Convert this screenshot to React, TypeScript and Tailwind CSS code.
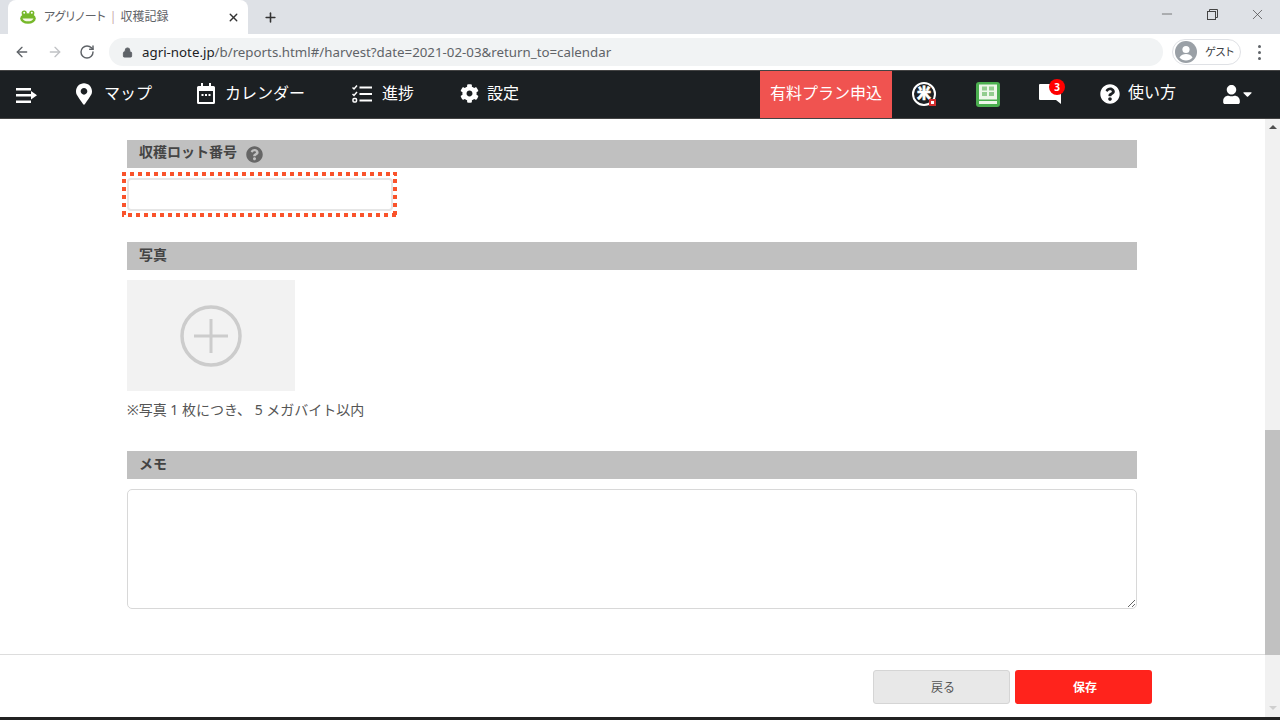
import { ArrowLeft, ArrowRight, Lock, Minus, Plus, RotateCw, X } from "lucide-react";
import { FaCaretDown, FaCog, FaMapMarkerAlt, FaQuestionCircle, FaUser } from "react-icons/fa";

const FONT = "font-['Noto_Sans','Noto_Sans_CJK_JP',sans-serif]";

function FrogIcon() {
  return (
    <svg width="16" height="14" viewBox="0 0 16 14">
      <circle cx="4.2" cy="3" r="2.6" fill="#76b82a" />
      <circle cx="11.8" cy="3" r="2.6" fill="#76b82a" />
      <ellipse cx="8" cy="8.5" rx="7.8" ry="5.2" fill="#76b82a" />
      <circle cx="4.2" cy="2.8" r="1" fill="#fff" />
      <circle cx="11.8" cy="2.8" r="1" fill="#fff" />
      <path d="M2.5 8.5h11c-.8 2-3 2.8-5.500 2.800s-4.700-.8-5.500-2.800z" fill="#f6f7e8" />
    </svg>
  );
}

function CalendarIcon() {
  return (
    <svg width="18" height="21" viewBox="0 0 18 21" fill="#fff">
      <path d="M4 0h2v3h6V0h2v3h2.500A1.500 1.500 0 0 1 18 4.500v15a1.500 1.500 0 0 1-1.500 1.500h-15A1.500 1.500 0 0 1 0 19.500v-15A1.500 1.500 0 0 1 1.500 3H4zM2 8v11h14V8z" />
      <rect x="4.500" y="11" width="2" height="2" />
      <rect x="8" y="11" width="2" height="2" />
      <rect x="11.500" y="11" width="2" height="2" />
    </svg>
  );
}

function ChecklistIcon() {
  return (
    <svg width="20" height="18" viewBox="0 0 20 18" fill="none" stroke="#fff">
      <path d="M7.500 2.500H20M7.500 9H20M7.500 15.500H20" strokeWidth="2" />
      <path d="M0.500 2.500 2 4l3-3.500M0.500 9 2 10.500l3-3.500" strokeWidth="1.500" />
      <rect x="1" y="13.500" width="3.500" height="3.500" rx="1" strokeWidth="1.500" />
    </svg>
  );
}

function MenuArrowIcon() {
  return (
    <svg width="21" height="15" viewBox="0 0 21 15" fill="#fff">
      <rect x="0" y="0" width="15" height="2.500" />
      <rect x="0" y="6" width="15" height="2.500" />
      <rect x="0" y="12.500" width="15" height="2.500" />
      <path d="M15 3l6 4.250-6 4.250z" />
    </svg>
  );
}

function BookIcon() {
  return (
    <svg width="24" height="25" viewBox="0 0 24 25">
      <rect width="24" height="25" rx="3" fill="#4caf50" />
      <rect x="3" y="2.500" width="18" height="19.500" fill="#eef7ea" />
      <g fill="#93cd8f">
        <rect x="6" y="4.500" width="5" height="4" />
        <rect x="13" y="4.500" width="5" height="4" />
        <rect x="6" y="10" width="5" height="4" />
        <rect x="13" y="10" width="5" height="4" />
      </g>
      <rect x="3" y="17.500" width="18" height="1.500" fill="#4caf50" />
    </svg>
  );
}

function CommentIcon() {
  return (
    <svg width="22" height="20" viewBox="0 0 22 20" fill="#fff">
      <path d="M1 0h20a1 1 0 0 1 1 1v19l-5-4H1a1 1 0 0 1-1-1V1a1 1 0 0 1 1-1z" />
    </svg>
  );
}

function GuestAvatar() {
  return (
    <svg width="22" height="22" viewBox="0 0 22 22">
      <circle cx="11" cy="11" r="11" fill="#9aa0a6" />
      <circle cx="11" cy="8.500" r="3.600" fill="#fff" />
      <path d="M4.500 16.500c1.500-2.500 4-3.400 6.500-3.400s5 .9 6.500 3.400c-1.600 2-3.900 3-6.500 3s-4.900-1-6.500-3z" fill="#fff" />
    </svg>
  );
}

function RestoreIcon() {
  return (
    <svg width="11" height="11" viewBox="0 0 11 11" fill="none" stroke="#444">
      <rect x="0.500" y="2.500" width="8" height="8" />
      <path d="M2.500 2.500v-2h8v8h-2" />
    </svg>
  );
}

function SectionHeader({ title, help }: { title: string; help?: boolean }) {
  return (
    <div className="flex h-7 items-center gap-[9px] bg-[#c0c0c0] pl-3 text-[14px] font-bold text-[#444]">
      <span className={help ? "mb-[6px]" : "mb-[4px]"}>{title}</span>
      {help && <FaQuestionCircle className="h-[17px] w-[17px] text-[#666]" />}
    </div>
  );
}

function NavItem({ icon, label, className }: { icon: React.ReactNode; label: string; className: string }) {
  return (
    <div className={`mb-[2px] flex items-center text-[16px] text-white ${className}`}>
      {icon}
      <span className="mb-[2px]">{label}</span>
    </div>
  );
}

function Browser() {
  return (
    <>
      <div className="flex h-[34px] bg-[#dee1e6]">
        <div className="ml-[8px] flex h-[34px] w-[240px] items-center rounded-t-lg bg-white pl-3 pr-[8px]">
          <FrogIcon />
          <span className="ml-2 flex-1 text-[12px] text-[#5f6368] [font-feature-settings:'palt']">
            アグリノート<span className="mx-[4px] text-[#c9a9a9]">|</span>収穫記録
          </span>
          <X className="h-[13px] w-[13px] text-[#333]" strokeWidth={2.500} />
        </div>
        <Plus className="mt-[10px] ml-[15px] h-[15px] w-[15px] text-[#333]" strokeWidth={2.500} />
        <div className="flex flex-1 items-start justify-end gap-[31px] pt-[6px] pr-[14px]">
          <Minus className="mr-[1px] h-[16px] w-[16px] text-[#444]" strokeWidth={1} />
          <div className="pt-[3px]">
            <RestoreIcon />
          </div>
          <X className="h-[17px] w-[17px] text-[#444]" strokeWidth={1} />
        </div>
      </div>
      <div className="flex h-[36px] items-center bg-white">
        <ArrowLeft className="ml-[14px] h-[16px] w-[16px] text-[#5f6368]" strokeWidth={2} />
        <ArrowRight className="ml-[17px] h-[16px] w-[16px] text-[#c0c2c5]" strokeWidth={2} />
        <RotateCw className="ml-[16px] h-[16px] w-[16px] text-[#5f6368]" strokeWidth={2.200} />
        <div className="ml-[14px] flex h-[28px] w-[1054px] items-center rounded-full bg-[#f1f3f4] pl-[13px]">
          <Lock className="h-[11px] w-[11px] fill-[#5f6368] text-[#5f6368]" strokeWidth={2} />
          <span className="mt-[1px] ml-[9px] text-[13.3px] text-[#5f6368]">
            <span className="text-[#202124]">agri-note.jp</span>/b/reports.html#/harvest?date=2021-02-03&amp;return_to=calendar
          </span>
        </div>
        <div className="ml-[9px] flex h-[26px] w-[69px] items-center rounded-full border border-[#dfe1e5] pl-[2px]">
          <GuestAvatar />
          <span className="ml-[8px] text-[11px] text-[#3c4043] [font-feature-settings:'palt']">ゲスト</span>
        </div>
        <div className="ml-[17px] flex flex-col gap-[3px]">
          <span className="h-[3px] w-[3px] rounded-full bg-[#5f6368]" />
          <span className="h-[3px] w-[3px] rounded-full bg-[#5f6368]" />
          <span className="h-[3px] w-[3px] rounded-full bg-[#5f6368]" />
        </div>
      </div>
    </>
  );
}

function TopNav() {
  return (
    <nav className="flex h-[49px] items-center border-y border-[#444] bg-[#1c2023]">
      <div className="ml-[16px] mb-[-1px] w-[60px]">
        <MenuArrowIcon />
      </div>
      <NavItem className="w-[121px] gap-[12px]" icon={<FaMapMarkerAlt className="h-[22px] w-[16px]" />} label="マップ" />
      <NavItem className="w-[155px] gap-[10px]" icon={<CalendarIcon />} label="カレンダー" />
      <NavItem className="w-[108px] gap-[10px]" icon={<ChecklistIcon />} label="進捗" />
      <NavItem className="w-[300px] gap-[8px]" icon={<FaCog className="h-[19px] w-[19px]" />} label="設定" />
      <div className="flex h-full w-[132px] items-center justify-center bg-[#f05350] pb-[4px] text-[16px] text-white">
        有料プラン申込
      </div>
      <div className="mb-[2px] ml-[20px]">
        <div className="relative flex h-[24px] w-[24px] items-center justify-center rounded-full border-[2.500px] border-white pb-[2px] text-[14px] leading-none font-black text-white [-webkit-text-stroke:0.5px_white]">
          米
          <span className="absolute right-[-2px] bottom-[-2px] flex h-[7px] w-[7px] items-center justify-center bg-[#d32f2f]">
            <span className="h-[3px] w-[3px] bg-white" />
          </span>
        </div>
      </div>
      <div className="mb-[1px] ml-[40px]">
        <BookIcon />
      </div>
      <div className="relative mb-[1px] ml-[39px] h-[20px] w-[22px]">
        <CommentIcon />
        <span className="absolute top-[-5px] left-[10px] flex h-[16px] w-[16px] items-center justify-center rounded-full bg-[#f00] text-[10px] leading-none font-bold text-white">
          3
        </span>
      </div>
      <div className="mb-[2px] ml-[39px] flex items-center gap-[8px] text-[16px] text-white">
        <FaQuestionCircle className="h-[20px] w-[20px]" />
        <span className="mb-[4px]">使い方</span>
      </div>
      <div className="mb-[1px] ml-[47px] flex items-center">
        <FaUser className="h-[19px] w-[17px] text-white" />
        <FaCaretDown className="ml-[2px] h-[14px] w-[11px] text-white" />
      </div>
    </nav>
  );
}

function Form() {
  return (
    <div className="flex-1 pt-[21px] pl-[127px] pr-[128px]">
      <SectionHeader title="収穫ロット番号" help />
      <div className="mt-[4px] -ml-[5px] h-[45px] w-[275px] pt-[6px] pr-[4px] pl-[5px] [background:repeating-linear-gradient(90deg,#f9532b_0_4px,transparent_4px_8px)_0_0/100%_4px_no-repeat,repeating-linear-gradient(90deg,#f9532b_0_2px,transparent_2px_6px,#f9532b_6px_8px)_0_100%/100%_4px_no-repeat,repeating-linear-gradient(180deg,#f9532b_0_3px,transparent_3px_7px,#f9532b_7px_8px)_0_0/4px_100%_no-repeat,repeating-linear-gradient(180deg,#f9532b_0_3px,transparent_3px_7px,#f9532b_7px_8px)_100%_0/4px_100%_no-repeat]">
        <input className="block h-[33px] w-full rounded-[4px] border-2 border-[#e6e6e6] bg-white" />
      </div>
      <div className="mt-[25px]">
        <SectionHeader title="写真" />
      </div>
      <div className="mt-[10px] flex h-[111px] w-[168px] items-center justify-center bg-[#f2f2f2]">
        <svg width="62" height="62" viewBox="0 0 62 62" fill="none" stroke="#ccc" strokeWidth="3.500">
          <circle cx="31" cy="31" r="29" />
          <path d="M31 14v34M14 31h34" strokeWidth="3" />
        </svg>
      </div>
      <p className="mt-[9px] mb-[1px] h-[20px] text-[14px] leading-[20px] text-[#555]">※写真 1 枚につき、 5 メガバイト以内</p>
      <div className="mt-[31px]">
        <SectionHeader title="メモ" />
      </div>
      <textarea className="mt-[10px] block h-[120px] w-full rounded-[5px] border border-[#d8d8d8] bg-white" />
    </div>
  );
}

function Footer() {
  return (
    <div className="flex h-[63px] justify-end gap-[5px] border-t border-[#ddd] pt-[15px] pr-[113px]">
      <button className="h-[34px] w-[137px] rounded-[3px] border border-[#d5d5d5] bg-[#e8e8e8] pt-[1px] pl-[3px] text-[12px] text-[#555]">
        戻る
      </button>
      <button className="h-[34px] w-[137px] rounded-[3px] bg-[#ff231c] pt-[1px] pl-[3px] text-[12px] font-bold text-white">
        保存
      </button>
    </div>
  );
}

function Scrollbar() {
  return (
    <div className="flex w-[15px] flex-col items-center bg-[#f1f1f1]">
      <div className="mt-[6px] h-0 w-0 border-x-[4.500px] border-b-[4.500px] border-x-transparent border-b-[#505050]" />
      <div className="mt-[301px] h-[225px] w-full bg-[#c1c1c1]" />
      <div className="mt-[51px] h-0 w-0 border-x-[4.500px] border-t-[4.500px] border-x-transparent border-t-[#cfcfcf]" />
    </div>
  );
}

export default function App() {
  return (
    <div className={`flex h-[720px] w-[1280px] flex-col overflow-hidden bg-white ${FONT}`}>
      <Browser />
      <TopNav />
      <div className="flex min-h-0 flex-1">
        <div className="flex flex-1 flex-col">
          <Form />
          <Footer />
        </div>
        <Scrollbar />
      </div>
      <div className="h-[3px] bg-[#222]" />
    </div>
  );
}
